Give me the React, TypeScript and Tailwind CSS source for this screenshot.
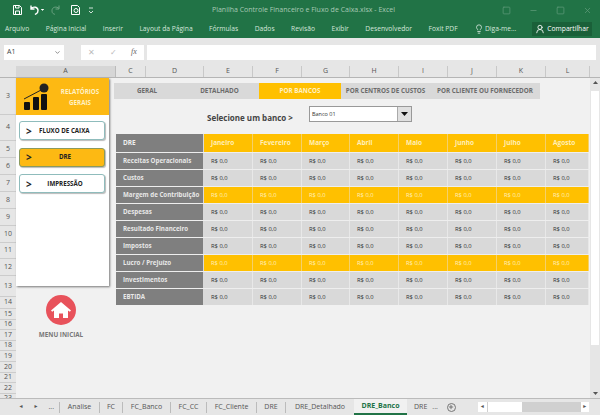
import { ChevronDown, Lightbulb, Minus, Plus, Square, UserRound, X } from "lucide-react";

const ribbon = ["Arquivo", "Página Inicial", "Inserir", "Layout da Página", "Fórmulas", "Dados", "Revisão", "Exibir", "Desenvolvedor", "Foxit PDF"];
const columns = [
  { label: "C", width: "w-[30px]" },
  { label: "D", width: "w-[58px]" },
  { label: "E", width: "w-[49px]" },
  { label: "F", width: "w-[49px]" },
  { label: "G", width: "w-[48px]" },
  { label: "H", width: "w-[49px]" },
  { label: "I", width: "w-[49px]" },
  { label: "J", width: "w-[49px]" },
  { label: "K", width: "w-[49px]" },
  { label: "L", width: "w-[44px]" },
];
const rowHeaders = [
  { label: "3", height: "h-[37px]" },
  { label: "4", height: "h-[26px]" },
  { label: "5", height: "h-[17px]" },
  { label: "6", height: "h-[17px]" },
  { label: "7", height: "h-[17px]" },
  { label: "8", height: "h-[17px]" },
  { label: "9", height: "h-[17px]" },
  { label: "10", height: "h-[17px]" },
  { label: "11", height: "h-[16px]" },
  { label: "12", height: "h-[17px]" },
  { label: "13", height: "h-[21px]" },
  { label: "14", height: "h-[12px]" },
];
const lowerRows = ["15", "16", "17", "18", "19", "20", "21", "22", "23"];
const months = [
  { label: "Janeiro", width: "w-[49px]" },
  { label: "Fevereiro", width: "w-[49px]" },
  { label: "Março", width: "w-[48px]" },
  { label: "Abril", width: "w-[49px]" },
  { label: "Maio", width: "w-[49px]" },
  { label: "Junho", width: "w-[49px]" },
  { label: "Julho", width: "w-[49px]" },
  { label: "Agosto", width: "w-[43px]" },
];
const lines = [
  { label: "Receitas Operacionais", hot: false },
  { label: "Custos", hot: false },
  { label: "Margem de Contribuição", hot: true },
  { label: "Despesas", hot: false },
  { label: "Resultado Financeiro", hot: false },
  { label: "Impostos", hot: false },
  { label: "Lucro / Prejuízo", hot: true },
  { label: "Investimentos", hot: false },
  { label: "EBTIDA", hot: false },
];
const tabs = [
  { label: "GERAL", width: "w-[66px]", active: false },
  { label: "DETALHADO", width: "w-[79px]", active: false },
  { label: "POR BANCOS", width: "w-[82px]", active: true },
  { label: "POR CENTROS DE CUSTOS", width: "w-[89px]", active: false },
  { label: "POR CLIENTE OU FORNECEDOR", width: "w-[110px]", active: false },
];
const sheets = [
  { label: "Analise", width: "w-[40px]" },
  { label: "FC", width: "w-[23px]" },
  { label: "FC_Banco", width: "w-[48px]" },
  { label: "FC_CC", width: "w-[36px]" },
  { label: "FC_Cliente", width: "w-[50px]" },
  { label: "DRE", width: "w-[29px]" },
  { label: "DRE_Detalhado", width: "w-[69px]" },
];

function MenuButton({ label, active, center }: { label: string; active?: boolean; center?: boolean }) {
  return (
    <div
      className={`flex h-[19px] w-[86px] items-center rounded-[3px] border pl-[6px] text-[6.2px] font-bold text-[#222] shadow-[1px_1px_1px_#bbb] ${
        active ? "border-[#8a9a60] bg-[#fdb913]" : "border-[#8fbcbc] bg-white"
      }`}
    >
      <span className="w-[13px] text-[10px] leading-none">&gt;</span>
      <span className={center ? "flex-1 pr-[13px] text-center" : ""}>{label}</span>
    </div>
  );
}

export default function App() {
  return (
    <div className="flex h-[415px] w-[600px] flex-col overflow-hidden bg-[#f1f1f1] font-['Open_Sans',sans-serif] text-[#444]">
      <div className="h-[38px] shrink-0 bg-[#217346] text-[#d5e6dc]">
        <div className="relative flex h-[20px] items-center pl-[13px]">
          <svg width="82" height="10" viewBox="0 0 82 10" fill="none" stroke="#fff" strokeWidth="1">
            <path d="M0.5 0.5h6l2 2v7h-8z M2.5 0.5v2.5h3.5V0.5 M2.5 9.5V6h4v3.5" />
            <path d="M18 3.5c2.5-2.5 7-1.5 7 2s-1.5 3-3 4 M18 0.5v3.5h3.5" strokeWidth="1.4" />
            <path d="M28 4l1.5 1.5L31 4" fill="#fff" strokeWidth="0.6" />
            <path d="M46 3.5c-2.5-2.5-7-1.5-7 2s1.5 3 3 4 M46 0.5v3.5h-3.5" stroke="#6ea584" />
            <path d="M58.5 0.5h6l2 2v7h-8z" />
            <circle cx="63" cy="5.5" r="2" />
            <path d="M76 3h4 M76 6l2 2 2-2" strokeWidth="0.8" />
          </svg>
          <span className="absolute left-[212px] text-[7px] text-[#a8c9b5]">Planilha Controle Financeiro e Fluxo de Caixa.xlsx - Excel</span>
          <div className="absolute right-[8px] flex items-center gap-[18px] text-[#5d9a78]">
            <Square size={9} />
            <Minus size={9} />
            <Square size={9} />
            <X size={9} />
          </div>
        </div>
        <div className="relative flex h-[18px] items-center pl-[5px] text-[6.7px]">
          <div className="flex gap-[16.5px]">
            {ribbon.map((item) => (
              <span key={item}>{item}</span>
            ))}
          </div>
          <div className="absolute left-[474px] flex items-center gap-[1px]">
            <Lightbulb size={10} />
            <span>Diga-me...</span>
          </div>
          <div className="absolute right-[8px] flex h-[14px] w-[60px] items-center justify-center gap-[2px] bg-[#1a6039] text-white">
            <UserRound size={10} />
            <span>Compartilhar</span>
          </div>
        </div>
      </div>

      <div className="flex h-[28px] shrink-0 items-center bg-[#e6e6e6] px-[4px]">
        <div className="flex h-[15px] w-[60px] items-center justify-between bg-white px-[3px] text-[7px]">
          <span>A1</span>
          <ChevronDown size={7} />
        </div>
        <div className="ml-[17px] flex h-[15px] w-[63px] items-center justify-around bg-white text-[8px] text-[#bbb]">
          <span>✕</span>
          <span>✓</span>
          <span className="font-['Liberation_Serif',serif] italic text-[#666]">fx</span>
        </div>
        <div className="ml-[3px] h-[15px] flex-1 bg-white" />
      </div>

      <div className="flex h-[11px] shrink-0 bg-[#e6e6e6] text-[7px] text-[#555]">
        <div className="w-[16px] shrink-0" />
        <div className="flex w-[100px] shrink-0 items-center justify-center border-r border-[#bbb] bg-[#d6d6d6]">A</div>
        {columns.map((col) => (
          <div key={col.label} className={`flex ${col.width} shrink-0 items-center justify-center border-r border-[#c8c8c8]`}>
            {col.label}
          </div>
        ))}
        <div className="flex-1" />
      </div>

      <div className="flex min-h-0 flex-1 border-t border-[#b5b5b5]">
        <div className="flex w-[16px] shrink-0 flex-col bg-[#e6e6e6] text-[7px] text-[#555]">
          {rowHeaders.map((row) => (
            <div key={row.label} className={`flex ${row.height} shrink-0 items-center justify-center border-b border-[#ccc]`}>
              {row.label}
            </div>
          ))}
          {lowerRows.map((row) => (
            <div key={row} className="flex h-[10.6px] shrink-0 items-center justify-center border-b border-[#ccc]">
              {row}
            </div>
          ))}
        </div>

        <div className="flex w-[98px] shrink-0 flex-col">
          <div className="flex h-[208px] w-[93px] flex-col bg-white shadow-[1px_1px_2px_#777]">
            <div className="flex h-[37px] items-center bg-[#fdb913] pl-[7px]">
              <svg width="26" height="27" viewBox="0 0 26 27">
                <path d="M1 16l19-10" stroke="#222" strokeWidth="1" />
                <path d="M22 4l-5 0 2 4z" fill="#222" />
                <circle cx="21" cy="5" r="4.5" fill="#222" />
                <rect x="1" y="19" width="6" height="8" rx="1" fill="#111" />
                <rect x="10" y="14" width="6" height="13" rx="1" fill="#111" />
                <rect x="18" y="11" width="6" height="16" rx="1" fill="#111" />
              </svg>
              <div className="ml-[6px] w-[50px] text-center text-[6.2px] font-bold leading-[11px] text-[#fff1c4]">
                RELATÓRIOS GERAIS
              </div>
            </div>
            <div className="flex flex-col gap-[7.5px] pl-[3px] pt-[6px]">
              <MenuButton label="FLUXO DE CAIXA" />
              <MenuButton label="DRE" active center />
              <MenuButton label="IMPRESSÃO" center />
            </div>
          </div>
          <div className="mt-[9px] flex w-[90px] flex-col items-center">
            <div className="flex h-[30px] w-[30px] items-center justify-center rounded-full bg-[#e8525b]">
              <svg width="20" height="18" viewBox="0 0 20 18" fill="#fff">
                <path d="M10 1L0 9.5l1.2 1.3L3 9.4V17h5v-4.5h4V17h5V9.4l1.8 1.4L20 9.5z" />
              </svg>
            </div>
            <span className="mt-[5px] text-[6.3px] font-bold text-[#777]">MENU INICIAL</span>
          </div>
        </div>

        <div className="flex w-[476px] shrink-0 flex-col pt-[5px]">
          <div className="flex h-[16px] text-[6.3px] font-bold text-[#6b6b6b]">
            {tabs.map((tab) => (
              <div
                key={tab.label}
                className={`flex ${tab.width} shrink-0 items-center justify-center whitespace-nowrap ${
                  tab.active ? "bg-[#ffc000] text-[#fff1c4]" : "bg-[#d9d9d9]"
                }`}
              >
                {tab.label}
              </div>
            ))}
          </div>
          <div className="flex h-[35px] items-center">
            <span className="ml-[93px] mt-[3px] w-[102px] text-[8px] font-bold text-[#444]">Selecione um banco &gt;</span>
            <div className="mb-[6px] flex h-[16px] w-[103px] items-stretch border border-[#999] bg-white">
              <span className="flex-1 pl-[2px] text-[5.5px] leading-[14px] text-[#333]">Banco 01</span>
              <div className="flex w-[14px] items-center justify-center border-l border-[#aaa] bg-[#e0e0e0]">
                <svg width="7" height="4" viewBox="0 0 7 4">
                  <path d="M0 0h7L3.5 4z" fill="#111" />
                </svg>
              </div>
            </div>
          </div>
          <div className="ml-[2px] flex flex-col">
            <div className="flex h-[18px] text-[6.5px]">
              <div className="flex w-[88px] shrink-0 items-center border-r border-[#d9d9d9] bg-[#7f7f7f] pl-[7px] font-bold text-[#eee]">DRE</div>
              {months.map((month) => (
                <div key={month.label} className={`flex ${month.width} shrink-0 items-center border-r border-[#f5d06a] bg-[#ffc000] pl-[7px] font-bold text-[#ffefb8]`}>
                  {month.label}
                </div>
              ))}
            </div>
            {lines.map((line) => (
              <div key={line.label} className="flex h-[17px] border-t border-[#eee]">
                <div className="flex w-[88px] shrink-0 items-center whitespace-nowrap border-r border-[#d9d9d9] bg-[#7f7f7f] pl-[7px] text-[6.2px] font-bold text-[#e8e8e8]">
                  {line.label}
                </div>
                {months.map((month) => (
                  <div
                    key={month.label}
                    className={`flex ${month.width} shrink-0 items-center border-r pl-[7px] text-[5.8px] ${
                      line.hot ? "border-[#f5d06a] bg-[#ffc000] text-[#ffefb8]" : "border-[#e8e8e8] bg-[#d9d9d9] text-[#333]"
                    }`}
                  >
                    R$ 0,0
                  </div>
                ))}
              </div>
            ))}
          </div>
        </div>

        <div className="flex w-[10px] shrink-0 flex-col items-center bg-[#e6e6e6] text-[#666]">
          <svg width="7" height="10" viewBox="0 0 7 10">
            <path d="M1 6l2.5-3L6 6z" fill="#555" />
          </svg>
          <div className="mt-[3px] h-[254px] w-[8px] bg-white" />
          <div className="flex-1" />
          <svg width="7" height="10" viewBox="0 0 7 10">
            <path d="M1 4l2.5 3L6 4z" fill="#555" />
          </svg>
        </div>
      </div>

      <div className="flex h-[17px] shrink-0 items-center border-t border-[#bbb] bg-[#e6e6e6] text-[7px] text-[#555]">
        <div className="flex w-[59px] shrink-0 items-center justify-end gap-[10px] pr-[5px]">
          <span className="text-[5px]">◄</span>
          <span className="text-[5px]">►</span>
          <span>...</span>
        </div>
        {sheets.map((sheet) => (
          <div key={sheet.label} className={`flex ${sheet.width} h-[11px] shrink-0 items-center justify-center border-l border-[#bbb]`}>
            {sheet.label}
          </div>
        ))}
        <div className="flex h-full w-[53px] shrink-0 items-center justify-center border-b-2 border-[#217346] bg-[#f1f1f1] font-bold text-[#217346]">
          DRE_Banco
        </div>
        <span className="ml-[7px]">DRE</span>
        <span className="ml-[5px]">...</span>
        <div className="ml-[9px] flex h-[9px] w-[9px] items-center justify-center rounded-full border border-[#777]">
          <Plus size={6} strokeWidth={3} />
        </div>
        <div className="ml-[22px] flex h-[10px] w-[111px] items-center bg-[#d0d0d0]">
          <div className="flex h-full w-[9px] items-center justify-center bg-white text-[5px]">◄</div>
          <div className="ml-[1px] h-full w-[34px] bg-white" />
          <div className="flex-1" />
          <div className="flex h-full w-[8px] items-center justify-center bg-white text-[5px]">►</div>
        </div>
      </div>
    </div>
  );
}
